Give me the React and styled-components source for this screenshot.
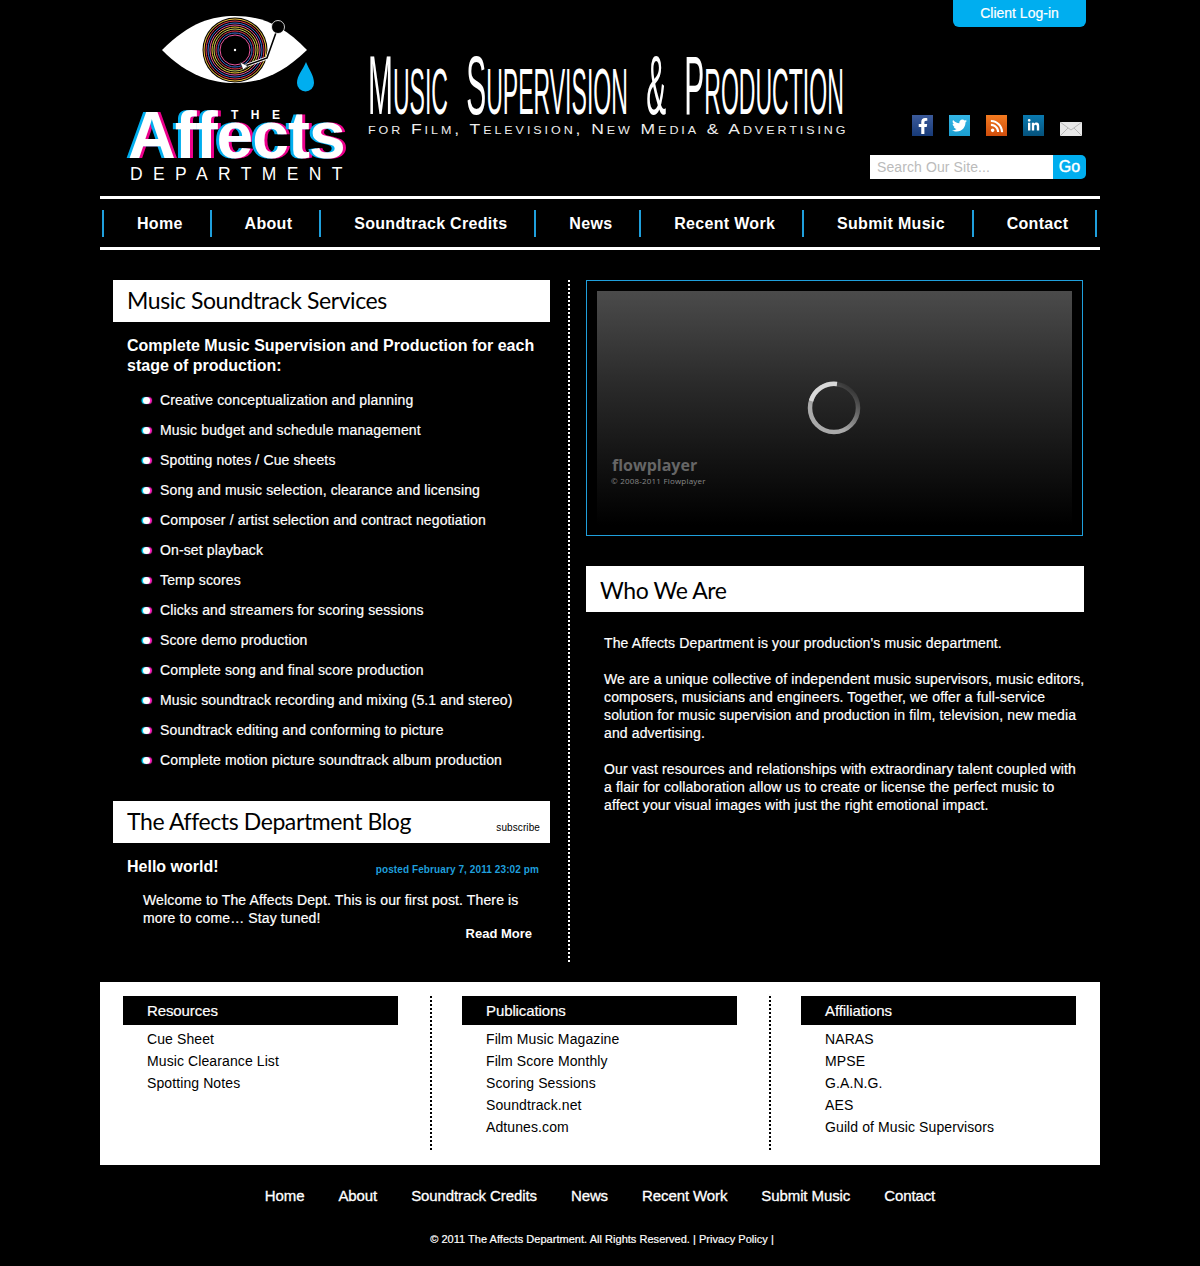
import styled, { createGlobalStyle } from 'styled-components';
import { FaFacebookF, FaTwitter, FaRss, FaLinkedinIn } from 'react-icons/fa';

const GlobalStyle = createGlobalStyle`
  body {
    margin: 0;
    background: #000;
    color: #fff;
    font-family: 'Liberation Sans', Arial, sans-serif;
  }
  a {
    color: inherit;
    text-decoration: none;
  }
`;

const Page = styled.div`
  width: 1000px;
  margin: 0 auto;
`;

const Header = styled.header`
  display: flex;
  height: 196px;
`;

const Logo = styled.div`
  position: relative;
  width: 268px;
  padding-top: 12px;
`;

const Eye = styled.svg`
  display: block;
  width: 156px;
  height: 82px;
  margin-left: 60px;
`;

const Word = styled.div`
  margin: 10px 0 0 28px;
  font-size: 66px;
  line-height: 62px;
  height: 62px;
  font-weight: bold;
  letter-spacing: -1px;
  text-shadow: -3px 0 #00aeef, 3px 0 #ec008c;
`;

const The = styled.div`
  position: absolute;
  top: 108px;
  left: 131px;
  font-size: 12px;
  font-weight: bold;
  line-height: 14px;
  letter-spacing: 12.5px;
`;

const Department = styled.div`
  margin: -2px 0 0 30px;
  font-size: 17.5px;
  line-height: 20px;
  letter-spacing: 10.4px;
  white-space: nowrap;
`;

const Headline = styled.div`
  width: 478px;
  padding-top: 53px;
`;

const HeadlineText = styled.h1`
  margin: 0;
  width: 1320px;
  height: 68px;
  transform: scaleX(0.36);
  transform-origin: left top;
  font-family: 'Liberation Sans', sans-serif;
  font-weight: normal;
  font-size: 64px;
  line-height: 66px;
  word-spacing: 33px;
  white-space: nowrap;
  text-transform: uppercase;
`;

const Cap = styled.span`
  font-size: 83px;
`;

const Tagline = styled.div`
  transform: scaleX(1.25);
  transform-origin: left center;
  font-size: 14px;
  line-height: 16px;
  letter-spacing: 2.35px;
  font-variant: small-caps;
  white-space: nowrap;
  color: #eee;
`;

const Tools = styled.div`
  display: flex;
  flex-direction: column;
  align-items: flex-end;
  width: 216px;
  margin-left: 24px;
`;

const LoginButton = styled.a`
  width: 133px;
  height: 27px;
  background: #00aeef;
  border-radius: 0 0 6px 6px;
  font-size: 14px;
  line-height: 27px;
  text-align: center;
  -webkit-text-stroke: 0.2px #fff;
`;

const Social = styled.div`
  display: flex;
  align-items: flex-end;
  gap: 16px;
  margin-top: 88px;
  margin-right: 4px;
`;

const SocialIcon = styled.a`
  display: flex;
  align-items: center;
  justify-content: center;
  width: 21px;
  height: 21px;
  font-size: ${(p) => p.$size || 13}px;
  color: #fff;
  background: ${(p) => p.$bg};
`;

const Mail = styled.svg`
  display: block;
  width: 22px;
  height: 14px;
`;

const Search = styled.form`
  display: flex;
  margin-top: 19px;
  height: 24px;
`;

const SearchInput = styled.input`
  box-sizing: border-box;
  width: 183px;
  height: 24px;
  padding: 0 7px;
  border: 0;
  background: #fff;
  font: 14px 'Liberation Sans', sans-serif;
  letter-spacing: 0.1px;
  &::placeholder {
    color: #bbb;
    opacity: 1;
  }
`;

const GoButton = styled.button`
  width: 33px;
  height: 24px;
  padding: 0;
  border: 0;
  border-radius: 0 5px 5px 0;
  background: #00aeef;
  color: #fff;
  font: 16px 'Liberation Sans', sans-serif;
  -webkit-text-stroke: 0.4px #fff;
`;

const Nav = styled.nav`
  display: flex;
  align-items: center;
  height: 48px;
  padding: 0 2px;
  border-top: 3px solid #fff;
  border-bottom: 3px solid #fff;
`;

const NavItem = styled.a`
  height: 27px;
  padding: 0 26.8px 0 33px;
  border-left: 2px solid #1f9fdc;
  font-size: 16px;
  font-weight: bold;
  line-height: 27px;
  letter-spacing: 0.32px;
  white-space: nowrap;
  &:last-child {
    border-right: 2px solid #1f9fdc;
  }
`;

const Main = styled.main`
  display: flex;
  padding: 30px 16px 20px 13px;
`;

const LeftColumn = styled.div`
  width: 437px;
  min-height: 682px;
`;

const Divider = styled.div`
  width: 0;
  margin: 0 16px 0 18px;
  border-left: 2px dotted #fff;
`;

const RightColumn = styled.div`
  width: 498px;
`;

const Band = styled.div`
  display: flex;
  box-sizing: border-box;
  align-items: center;
  justify-content: space-between;
  height: 42px;
  padding: 0 10px 0 14px;
  background: #fff;
  color: #000;
`;

const WhoBand = styled(Band)`
  height: 46px;
  padding-top: 4px;
`;

const BandTitle = styled.h2`
  margin: 0 0 3px;
  font-family: Lato, sans-serif;
  font-size: 23px;
  font-weight: normal;
  letter-spacing: -0.4px;
  white-space: nowrap;
`;

const Subscribe = styled.a`
  margin-top: 10px;
  font-size: 10px;
  letter-spacing: 0.1px;
`;

const Intro = styled.p`
  margin: 14px 14px 0;
  font-size: 16px;
  font-weight: bold;
  line-height: 20px;
`;

const ServiceList = styled.ul`
  margin: 9px 0 26px;
  padding: 0;
  list-style: none;
`;

const ServiceItem = styled.li`
  display: flex;
  align-items: center;
  gap: 10px;
  height: 30px;
  padding-left: 30px;
  font-size: 14px;
  letter-spacing: 0.13px;
  -webkit-text-stroke: 0.2px #fff;
  &::before {
    content: '';
    width: 7px;
    height: 7px;
    border-radius: 50%;
    background: #fff;
    box-shadow: -1.5px 0 1px #00d8ff, 2px 0 1px #ff20c0;
  }
`;

const PostHead = styled.div`
  display: flex;
  align-items: center;
  justify-content: space-between;
  margin-top: 14px;
  padding: 0 11px 0 14px;
`;

const PostTitle = styled.h3`
  margin: 0;
  font-size: 16px;
  line-height: 20px;
`;

const PostDate = styled.span`
  margin-top: 5px;
  font-size: 10px;
  font-weight: bold;
  letter-spacing: 0.1px;
  color: #1f9fdc;
`;

const PostBody = styled.p`
  margin: 14px 14px 0 30px;
  font-size: 14px;
  line-height: 18px;
  letter-spacing: 0.13px;
  -webkit-text-stroke: 0.2px #fff;
`;

const ReadMore = styled.a`
  display: block;
  margin: -2px 18px 0 0;
  font-size: 13px;
  font-weight: bold;
  line-height: 17px;
  text-align: right;
`;

const Player = styled.div`
  box-sizing: border-box;
  width: 497px;
  height: 256px;
  padding: 10px;
  border: 1px solid #1f9fdc;
`;

const Screen = styled.div`
  position: relative;
  width: 475px;
  height: 234px;
  background: linear-gradient(#4b4b4b, #2a2a2a 40%, #111 75%, #000);
`;

const Spinner = styled.svg`
  position: absolute;
  top: 90px;
  left: 210px;
  width: 54px;
  height: 54px;
`;

const Brand = styled.div`
  position: absolute;
  left: 15px;
  top: 164px;
  font-family: 'Open Sans', sans-serif;
  font-size: 16px;
  font-weight: bold;
  line-height: 20px;
  color: #666;
`;

const BrandNote = styled.div`
  position: absolute;
  left: 14px;
  top: 184px;
  font-family: 'Open Sans', sans-serif;
  font-size: 8px;
  line-height: 12px;
  letter-spacing: 0.2px;
  color: #888;
`;

const WhoSection = styled.section`
  margin-top: 30px;
`;

const WhoText = styled.div`
  width: 482px;
  margin-top: 22px;
  padding-left: 18px;
  font-size: 14px;
  line-height: 18px;
  letter-spacing: 0.13px;
  -webkit-text-stroke: 0.2px #fff;
`;

const WhoParagraph = styled.p`
  margin: 0 0 18px;
`;

const LinkPanel = styled.section`
  display: flex;
  box-sizing: border-box;
  height: 183px;
  padding: 14px 24px 15px 23px;
  background: #fff;
  color: #000;
`;

const LinkColumn = styled.div`
  width: 275px;
`;

const LinkDivider = styled.div`
  width: 0;
  margin: 0 30px 0 32px;
  border-left: 2px dotted #000;
`;

const LinkTitle = styled.h4`
  height: 29px;
  margin: 0 0 3px;
  padding-left: 24px;
  background: #000;
  color: #fff;
  font-size: 15px;
  font-weight: normal;
  line-height: 29px;
  letter-spacing: -0.1px;
  -webkit-text-stroke: 0.2px #fff;
`;

const LinkRow = styled.a`
  display: block;
  padding-left: 24px;
  font-size: 14px;
  line-height: 22px;
  letter-spacing: 0.1px;
`;

const FooterNav = styled.nav`
  display: flex;
  justify-content: center;
  gap: 34px;
  margin-top: 22px;
  font-size: 15px;
  line-height: 18px;
  letter-spacing: -0.1px;
  -webkit-text-stroke: 0.3px #fff;
`;

const Copyright = styled.div`
  margin-top: 27px;
  padding: 0 0 20px 4px;
  font-size: 11px;
  line-height: 14px;
  letter-spacing: 0.03px;
  text-align: center;
  -webkit-text-stroke: 0.2px #fff;
`;

const navLinks = ['Home', 'About', 'Soundtrack Credits', 'News', 'Recent Work', 'Submit Music', 'Contact'];

const services = [
  'Creative conceptualization and planning',
  'Music budget and schedule management',
  'Spotting notes / Cue sheets',
  'Song and music selection, clearance and licensing',
  'Composer / artist selection and contract negotiation',
  'On-set playback',
  'Temp scores',
  'Clicks and streamers for scoring sessions',
  'Score demo production',
  'Complete song and final score production',
  'Music soundtrack recording and mixing (5.1 and stereo)',
  'Soundtrack editing and conforming to picture',
  'Complete motion picture soundtrack album production',
];

const linkGroups = [
  { title: 'Resources', links: ['Cue Sheet', 'Music Clearance List', 'Spotting Notes'] },
  { title: 'Publications', links: ['Film Music Magazine', 'Film Score Monthly', 'Scoring Sessions', 'Soundtrack.net', 'Adtunes.com'] },
  { title: 'Affiliations', links: ['NARAS', 'MPSE', 'G.A.N.G.', 'AES', 'Guild of Music Supervisors'] },
];

const ringColors = ['#f0c13c', '#e23b4e', '#3a6fd0', '#e8559b', '#f0c13c', '#c9d05a', '#e23b4e', '#3a6fd0', '#e8559b'];

function EyeMark() {
  return (
    <Eye viewBox="0 0 156 82">
      <path d="M2 38 C30 10 52 4 75 4 C100 4 122 12 147 38 C122 62 100 71 75 71 C52 71 28 64 2 38 Z" fill="#fff" />
      <circle cx="75" cy="38" r="32.5" fill="#000" />
      {ringColors.map((color, i) => (
        <circle key={i} cx="75" cy="38" r={31 - i * 2} fill="none" stroke={color} strokeWidth="1" />
      ))}
      <circle cx="75" cy="38" r="12.5" fill="#000" />
      <circle cx="75" cy="38" r="1.2" fill="#fff" />
      <path d="M118 15 L107 46 L85 54" fill="none" stroke="#fff" strokeWidth="3.4" />
      <path d="M118 15 L107 46 L85 54" fill="none" stroke="#000" strokeWidth="1.6" />
      <path d="M80 50 L88 54 L83 58 Z" fill="#fff" stroke="#000" strokeWidth="0.6" />
      <circle cx="118" cy="15" r="6.5" fill="#000" stroke="#fff" strokeWidth="0.8" />
      <path d="M146 50 C149 58 154 63 154 71 A8.5 8.5 0 0 1 137 71 C137 63 143 58 146 50 Z" fill="#00aeef" />
    </Eye>
  );
}

function LinkGroup({ group, showDivider }) {
  return (
    <>
      <LinkColumn>
        <LinkTitle>{group.title}</LinkTitle>
        {group.links.map((link) => (
          <LinkRow href="#" key={link}>{link}</LinkRow>
        ))}
      </LinkColumn>
      {showDivider && <LinkDivider />}
    </>
  );
}

function App() {
  return (
    <Page>
      <GlobalStyle />
      <Header>
        <Logo>
          <EyeMark />
          <Word>Affects</Word>
          <The>THE</The>
          <Department>DEPARTMENT</Department>
        </Logo>
        <Headline>
          <HeadlineText>
            <Cap>M</Cap>usic <Cap>S</Cap>upervision <Cap>&amp;</Cap> <Cap>P</Cap>roduction
          </HeadlineText>
          <Tagline>for Film, Television, New Media &amp; Advertising</Tagline>
        </Headline>
        <Tools>
          <LoginButton href="#">Client Log-in</LoginButton>
          <Social>
            <SocialIcon href="#" $bg="linear-gradient(#3b5a9a, #173a78)" $size={16}><FaFacebookF /></SocialIcon>
            <SocialIcon href="#" $bg="linear-gradient(#33b5e5, #1b9ed0)" $size={15}><FaTwitter /></SocialIcon>
            <SocialIcon href="#" $bg="linear-gradient(#f47b20, #cf4d0c)" $size={14}><FaRss /></SocialIcon>
            <SocialIcon href="#" $bg="linear-gradient(#0a7ab0, #05527c)"><FaLinkedinIn /></SocialIcon>
            <Mail viewBox="0 0 22 14">
              <rect width="22" height="14" fill="#e8e8e8" />
              <path d="M0 0 L11 8 L22 0 M0 14 L8 6 M22 14 L14 6" fill="none" stroke="#aaa" strokeWidth="0.8" />
            </Mail>
          </Social>
          <Search>
            <SearchInput placeholder="Search Our Site..." />
            <GoButton type="button">Go</GoButton>
          </Search>
        </Tools>
      </Header>

      <Nav>
        {navLinks.map((link) => (
          <NavItem href="#" key={link}>{link}</NavItem>
        ))}
      </Nav>

      <Main>
        <LeftColumn>
          <Band>
            <BandTitle>Music Soundtrack Services</BandTitle>
          </Band>
          <Intro>Complete Music Supervision and Production for each stage of production:</Intro>
          <ServiceList>
            {services.map((service) => (
              <ServiceItem key={service}>{service}</ServiceItem>
            ))}
          </ServiceList>
          <Band>
            <BandTitle>The Affects Department Blog</BandTitle>
            <Subscribe href="#">subscribe</Subscribe>
          </Band>
          <PostHead>
            <PostTitle>Hello world!</PostTitle>
            <PostDate>posted February 7, 2011 23:02 pm</PostDate>
          </PostHead>
          <PostBody>Welcome to The Affects Dept. This is our first post. There is more to come… Stay tuned!</PostBody>
          <ReadMore href="#">Read More</ReadMore>
        </LeftColumn>
        <Divider />
        <RightColumn>
          <Player>
            <Screen>
              <Spinner viewBox="0 0 54 54">
                <defs>
                  <linearGradient id="spin" x1="0.9" y1="0.1" x2="0.4" y2="0.75">
                    <stop offset="0" stopColor="#333" />
                    <stop offset="1" stopColor="#aaa" />
                  </linearGradient>
                </defs>
                <circle cx="27" cy="27" r="24" fill="none" stroke="url(#spin)" strokeWidth="4.5" />
                <path d="M30 3 A24 24 0 0 0 4 20" fill="none" stroke="#d8d8d8" strokeWidth="4.5" />
              </Spinner>
              <Brand>flowplayer</Brand>
              <BrandNote>© 2008-2011 Flowplayer</BrandNote>
            </Screen>
          </Player>
          <WhoSection>
            <WhoBand>
              <BandTitle>Who We Are</BandTitle>
            </WhoBand>
            <WhoText>
              <WhoParagraph>The Affects Department is your production's music department.</WhoParagraph>
              <WhoParagraph>
                We are a unique collective of independent music supervisors, music editors, composers, musicians and engineers. Together, we offer a full-service solution for music supervision and production in film, television, new media and advertising.
              </WhoParagraph>
              <WhoParagraph>
                Our vast resources and relationships with extraordinary talent coupled with a flair for collaboration allow us to create or license the perfect music to affect your visual images with just the right emotional impact.
              </WhoParagraph>
            </WhoText>
          </WhoSection>
        </RightColumn>
      </Main>

      <LinkPanel>
        {linkGroups.map((group, i) => (
          <LinkGroup key={group.title} group={group} showDivider={i < linkGroups.length - 1} />
        ))}
      </LinkPanel>

      <FooterNav>
        {navLinks.map((link) => (
          <a href="#" key={link}>{link}</a>
        ))}
      </FooterNav>
      <Copyright>© 2011 The Affects Department. All Rights Reserved. | Privacy Policy |</Copyright>
    </Page>
  );
}

export default App;
